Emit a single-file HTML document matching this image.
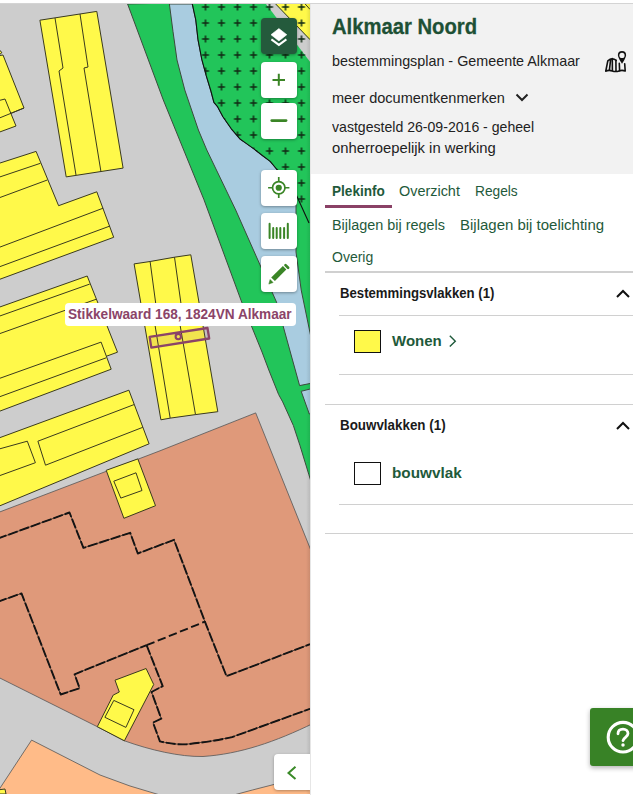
<!DOCTYPE html>
<html><head><meta charset="utf-8">
<style>
html,body{margin:0;padding:0;width:633px;height:795px;overflow:hidden;background:#fff;font-family:"Liberation Sans",sans-serif;}
#topline{position:absolute;left:0;top:3px;width:633px;height:1px;background:#d4d4d4;}
#map{position:absolute;left:0;top:0;width:310px;height:795px;}
.btn{position:absolute;left:261px;width:36px;height:36px;background:#fff;border-radius:4px;box-shadow:0 1px 3px rgba(0,0,0,.35);}
.btn svg{position:absolute;left:0;top:0;}
#panel{position:absolute;left:310px;top:4px;width:323px;height:791px;background:#fff;border-left:1px solid #e6e6e6;box-sizing:border-box;}
#head{position:absolute;left:311px;top:4px;width:322px;height:170px;background:#f2f2f2;}
.t{position:absolute;white-space:nowrap;line-height:1;}
</style></head><body>
<svg id="map" width="310" height="795" viewBox="0 0 310 795">
<defs>
<clipPath id="mc"><rect x="0" y="4" width="310" height="790"/></clipPath>
<pattern id="plus" patternUnits="userSpaceOnUse" x="5.5" y="-1" width="16" height="16">
<path d="M4.5 8H11.5M8 4.5V11.5" stroke="#0f2a14" stroke-width="1.5"/>
</pattern>
<clipPath id="pc"><path d="M192.3,4 L195.8,20 L198,39.6 L201.8,59.3 L206.3,75.9 L210.9,91 L213.9,102.3 L217.7,106.9 L222.9,116.7 L231.3,128.8 L240.3,139.3 L245.1,142.6 L253.9,148.9 L262.7,155.8 L270.2,161.4 L276.5,169 L290,182 L297,196.5 L309,222.9 L310,223 L310,4Z"/></clipPath>
<linearGradient id="shd" x1="0" x2="1" y1="0" y2="0"><stop offset="0" stop-color="#000" stop-opacity="0"/><stop offset="1" stop-color="#000" stop-opacity="0.09"/></linearGradient>
</defs>
<g clip-path="url(#mc)" stroke-linejoin="round">
<rect x="0" y="0" width="310" height="795" fill="#cdcdcd"/>
<!-- plain green -->
<path d="M127.6,4 L163.3,100 L204,199.8 L241.7,302.1 L262,352 L268.8,370 L278.6,394.5 L282.7,401.9 L293.4,425.6 L299.9,445.3 L308.9,474.7 L314,491.4 L314,0Z" fill="#22c55a" stroke="#3c4a3c" stroke-width="1"/>
<!-- water -->
<path d="M169.4,4 L173,31.6 L177,60 L184.8,90 L198.4,130 L206.8,150 L235.7,210 L276.5,302.1 L299.6,385.6 L314,382.7 L314,352 L301.2,290 L296,252 L296,190 L276.5,169 L270.2,161.4 L262.7,155.8 L253.9,148.9 L245.1,142.6 L240.3,139.3 L231.3,128.8 L222.9,116.7 L217.7,106.9 L213.9,102.3 L210.9,91 L206.3,75.9 L201.8,59.3 L198,39.6 L195.8,20 L192.3,4Z" fill="#a9cce0" stroke="#3c4a3c" stroke-width="1"/>
<path d="M301.2,391.3 L314,388 L314,413 L309.3,414Z" fill="#a9cce0" stroke="#3c4a3c" stroke-width="1"/>
<!-- pattern green -->
<path d="M192.3,4 L195.8,20 L198,39.6 L201.8,59.3 L206.3,75.9 L210.9,91 L213.9,102.3 L217.7,106.9 L222.9,116.7 L231.3,128.8 L240.3,139.3 L245.1,142.6 L253.9,148.9 L262.7,155.8 L270.2,161.4 L276.5,169 L290,182 L297,196.5 L309,222.9 L310,223 L310,4Z" fill="#22c55a"/>
<path d="M266,4 L310,61.8 L310,39.6 L275.7,4Z" fill="#cdcdcd"/>
<path d="M275.7,4 L310,39.6 L310,4Z" fill="#fff94a"/>
<path d="M275.7,4 L310,39.6 M305.2,4 L310,9.4" stroke="#3a3a1e" stroke-width="1"/>
<rect x="180" y="0" width="130" height="230" fill="url(#plus)" clip-path="url(#pc)"/>
<path d="M192.3,4 L195.8,20 L198,39.6 L201.8,59.3 L206.3,75.9 L210.9,91 L213.9,102.3 L217.7,106.9 L222.9,116.7 L231.3,128.8 L240.3,139.3 L245.1,142.6 L253.9,148.9 L262.7,155.8 L270.2,161.4 L276.5,169 L290,182 L297,196.5 L309,222.9" fill="none" stroke="#111" stroke-width="1.1"/>
<!-- salmon -->
<path d="M-3,513 L160,450.8 L255.7,412.9 L314,558 L314,723 C275,742 240,754 203,756.5 C180,757 150,750 124.4,740.8 L97.3,726.7 L-3,676.6Z" fill="#df997a" stroke="#555" stroke-width="0.8"/>
<!-- light orange -->
<path d="M-3,792.7 L31.6,740.1 L100,775 Q130,787 160,795 L230,796 Q252,790 275,784.2 L314,776 L314,800 L-3,800Z" fill="#ffbb88" stroke="#555" stroke-width="0.8"/>
<!-- buildings -->
<g fill="#fff94a" stroke="#3a3a1e" stroke-width="1">
<path d="M-3,48.8 L1.8,52.6 L-3,55Z"/>
<path d="M-3,56 L3,55 L24,108 L-3,119Z"/>
<path d="M-3,101 L5,99 L16,126 L-3,133Z"/>
<path d="M24,108 L-3,119" fill="none"/>
<path d="M-3,47 L1.8,52.6 L-3,57Z"/>
<path d="M39.9,20.2 L96.8,11.4 L123.1,168.1 L66.2,176.9Z"/>
<path d="M55,18 L63,68 L59,71 L76,175 M80,14 L88,67 L84,68 L101,172" fill="none"/>
<path d="M-3,164 L36.1,151.4 L58.6,205.7 L96.8,191.8 L113.7,237.3 L-3,280.3Z"/>
<path d="M-3,177.9 L40.4,163.3 M-3,198.6 L47.3,180 M-3,248.2 L103.1,208.2 M-3,267.7 L110,226" fill="none"/>
<path d="M-3,308 L87.2,276 L117.5,352.2 L-3,396Z"/>
<path d="M-3,317 L89.7,284.1 M-3,334.6 L96,299.3" fill="none"/>
<path d="M-3,379.3 L101.1,342.1 L111.2,369.2 L-3,412.2Z"/>
<path d="M-3,397.7 L106.2,357.8" fill="none"/>
<path d="M-3,438.7 L128.9,390.2 L149.1,443.8 L-3,507Z"/>
<path d="M37.9,441.2 L134,404.6 M45.5,465.2 L142.8,427.3 M37.9,441.2 L45.5,465.2" fill="none"/>
<path d="M-3,449.6 L27.3,441.2 L35.4,462.7 L-3,476.6Z"/>
<path d="M106.2,470.3 L137.8,458.9 L155.5,505.7 L123.9,518.3Z"/>
<path d="M113.8,481.2 L136,472.8 L142,490.5 L120.8,498.1Z"/>
<path d="M134.1,263.9 L150.1,261.5 L174.5,257.2 L190.8,254.8 L217.8,411.7 L195.5,414.6 L170.4,418.1 L160.9,419.8Z"/>
<path d="M150.1,261.5 L157,313 L153.5,316 L170.2,418.2 M174.5,257.2 L182.3,313 L178.5,316 L195.5,414.6" fill="none"/>
<path d="M115,680.2 L146.1,668.5 L153.7,684.5 L124.4,740.8 L97.3,726.7 L113.2,695.1 L119.3,692Z"/>
<path d="M113.8,700.4 L134,709.7 L125.9,727.4 L104.9,717.3Z"/>
<path d="M-3,790 L5,789 L6,794 L-3,794Z"/>
</g>
<!-- dashed -->
<g fill="none" stroke="#1a1a1a" stroke-width="0.7">
<path d="M-3,538.9 L69.5,512.5 L83.4,547.9 L130.2,532.8 L137.8,553.5 L174,539.8 L205.2,622.4 L226.5,676.2 L310,644.2"/>
<path d="M-3,602 L21.5,593.4 L60.7,694.5 L79.6,688.2 L74.6,674.3 L146.6,645.2"/>
<path d="M146.6,645.2 L162.7,686.1 L151.5,692 L161.3,718.7 L153,722.6 L159.9,741.3 Q175,745 186.8,744.2 Q210,742 232.1,737.1 L310,708.8"/>
</g>
<g fill="none" stroke="#141414" stroke-width="1.9" stroke-dasharray="10 2">
<path d="M-3,538.9 L69.5,512.5 L83.4,547.9 L130.2,532.8 L137.8,553.5 L174,539.8 L205.2,622.4 L226.5,676.2 L310,644.2"/>
<path d="M-3,602 L21.5,593.4 L60.7,694.5 L79.6,688.2 L74.6,674.3 L146.6,645.2"/>
<path d="M146.6,645.2 L162.7,686.1 L151.5,692 L161.3,718.7 L153,722.6 L159.9,741.3 Q175,745 186.8,744.2 Q210,742 232.1,737.1 L310,708.8"/>
</g>
<path d="M146.6,645.2 L205.2,621.5" fill="none" stroke="#141414" stroke-width="1.9" stroke-dasharray="8.5 3.5"/>
<rect x="306" y="4" width="4" height="790" fill="url(#shd)"/>
<!-- parcel -->
<path d="M149.6,336.8 L207.5,328 L209.2,338.5 L151.3,347.6Z" fill="rgba(140,70,105,0.12)" stroke="#8b4468" stroke-width="2.3"/>
<circle cx="178.3" cy="336.6" r="2.7" fill="none" stroke="#8b4468" stroke-width="2.1"/>
</g>
</svg>
<div style="position:absolute;left:64.5px;top:303px;width:231.5px;height:22.5px;background:#fff;border-radius:4px;"></div>
<div class="t" id="lbl" style="left:67.5px;top:307px;font-size:14px;font-weight:bold;color:#8b4468;transform:scaleX(0.973);transform-origin:0 0;">Stikkelwaard 168, 1824VN Alkmaar</div>

<!-- buttons -->
<div class="btn" style="top:18px;background:#245a3c;">
<svg width="36" height="36"><path d="M17.9 10.6 L25.8 16.7 L17.9 22.9 L10 16.7Z" fill="#fff" stroke="#fff" stroke-width="0.6" stroke-linejoin="round"/><path d="M10.4 21.4 L17.9 26.9 L25.4 21.4" fill="none" stroke="#fff" stroke-width="2"/></svg></div>
<div class="btn" style="top:62px;"><svg width="36" height="36"><path d="M11.5 18H24M17.8 11.7V23.8" stroke="#3a8526" stroke-width="2"/></svg></div>
<div class="btn" style="top:103px;"><svg width="36" height="36"><path d="M10.7 17.6H25.1" stroke="#3a8526" stroke-width="2.6" stroke-linecap="round"/></svg></div>
<div class="btn" style="top:170px;"><svg width="36" height="36"><circle cx="17.75" cy="17.75" r="6.2" fill="none" stroke="#3a8526" stroke-width="1.7"/><circle cx="17.75" cy="17.75" r="3.1" fill="#3a8526"/><path d="M7.1 17.75H11.6M23.9 17.75H28.4M17.75 7.1V11.6M17.75 23.9V27.9" stroke="#3a8526" stroke-width="1.7"/></svg></div>
<div class="btn" style="top:213px;"><svg width="36" height="36"><path d="M8.6 10.7V25M12.2 15V25M15.7 15V25M19.3 15V25M23.1 15V25M26.8 10.7V25" stroke="#3a8526" stroke-width="2" stroke-linecap="round"/></svg></div>
<div class="btn" style="top:256px;"><svg width="36" height="36"><path d="M10.2 21.6 L21.9 10 L25.3 13.4 L13.9 25Z" fill="#3a8526"/><path d="M9.1 23.5 L12.1 26.5 L7.8 28.1Z" fill="#3a8526" stroke="#3a8526" stroke-width="0.5" stroke-linejoin="round"/><path d="M24.5 9.1 L27.1 11.7" stroke="#3a8526" stroke-width="2.7" stroke-linecap="round"/></svg></div>

<!-- collapse -->
<div style="position:absolute;left:274px;top:754px;width:36px;height:36px;background:#fff;border-radius:4px 0 0 4px;box-shadow:0 1px 3px rgba(0,0,0,.3);">
<svg width="36" height="36"><path d="M21.5 12.7 L14.5 19 L21.5 25" fill="none" stroke="#3a8a28" stroke-width="2"/></svg></div>

<!-- panel -->
<div id="panel"></div>
<div id="head"></div>
<!-- panel text -->
<div class="t" id="title" style="left:332px;top:16px;font-size:22px;font-weight:bold;color:#1d5035;-webkit-text-stroke:0.3px #1d5035;transform:scaleX(0.92);transform-origin:0 0;">Alkmaar Noord</div>
<div class="t" id="sub" style="left:332px;top:53px;font-size:15px;color:#222;transform:scaleX(0.956);transform-origin:0 0;">bestemmingsplan - Gemeente Alkmaar</div>
<div class="t" id="meer" style="left:332px;top:90px;font-size:15px;color:#222;transform:scaleX(0.969);transform-origin:0 0;">meer documentkenmerken</div>
<svg style="position:absolute;left:514px;top:92px" width="16" height="12"><path d="M2.5 2.5 L8 8 L13.5 2.5" fill="none" stroke="#222" stroke-width="2"/></svg>
<div class="t" id="vast" style="left:332px;top:119px;font-size:15px;color:#222;transform:scaleX(0.939);transform-origin:0 0;">vastgesteld 26-09-2016 - geheel</div>
<div class="t" id="onh" style="left:332px;top:140px;font-size:15px;color:#222;transform:scaleX(0.987);transform-origin:0 0;">onherroepelijk in werking</div>
<svg style="position:absolute;left:600px;top:46px" width="32" height="30"><g fill="none" stroke="#111" stroke-width="1.6" stroke-linejoin="round" stroke-linecap="round"><path d="M5.8 25 L7.8 14.8 Q12 11.2 16.2 14.4"/><path d="M5.8 25 Q9 23.9 12.3 24.9 Q15.7 26 19 24.9 Q22.2 23.9 25.2 25 L24.7 17.8"/><path d="M10.6 13.6 L9.4 24.2 M12.3 12.5 L12.4 24.5 M15.9 14.2 L16 25.2 M19.3 17.2 L19.6 24.6"/></g><circle cx="22" cy="9.6" r="5.6" fill="#f2f2f2"/><path d="M22 5 A4.1 4.1 0 0 1 26.1 9.1 C26.1 12 22 17.8 22 17.8 C22 17.8 17.9 12 17.9 9.1 A4.1 4.1 0 0 1 22 5Z" fill="#111"/><circle cx="22" cy="9.4" r="2.6" fill="#f2f2f2"/></svg>

<div class="t" id="tab1" style="left:332px;top:184px;font-size:14px;font-weight:bold;color:#1f5a3b;transform:scaleX(0.97);transform-origin:0 0;">Plekinfo</div>
<div class="t" id="tab2" style="left:399px;top:184px;font-size:14px;color:#1f5a3b;transform:scaleX(1.03);transform-origin:0 0;">Overzicht</div>
<div class="t" id="tab3" style="left:475px;top:184px;font-size:14px;color:#1f5a3b;transform:scaleX(0.98);transform-origin:0 0;">Regels</div>
<div style="position:absolute;left:325px;top:205px;width:67px;height:3px;background:#8a4166;"></div>
<div class="t" id="tab4" style="left:332px;top:218px;font-size:14px;color:#1f5a3b;transform:scaleX(1.03);transform-origin:0 0;">Bijlagen bij regels</div>
<div class="t" id="tab5" style="left:460px;top:218px;font-size:14px;color:#1f5a3b;transform:scaleX(1.07);transform-origin:0 0;">Bijlagen bij toelichting</div>
<div class="t" id="tab6" style="left:332px;top:250px;font-size:14px;color:#1f5a3b;">Overig</div>
<div style="position:absolute;left:325px;top:271px;width:308px;height:2px;background:#d0d0d0;"></div>

<div class="t" id="sec1" style="left:340px;top:286px;font-size:14px;font-weight:bold;color:#1a1a1a;transform:scaleX(0.94);transform-origin:0 0;">Bestemmingsvlakken (1)</div>
<svg style="position:absolute;left:614px;top:286px" width="18" height="14"><path d="M3 11 L9 5 L15 11" fill="none" stroke="#111" stroke-width="2"/></svg>
<div style="position:absolute;left:339px;top:315px;width:294px;height:1px;background:#d0d0d0;"></div>
<div style="position:absolute;left:354px;top:330px;width:27px;height:23px;box-sizing:border-box;border:1px solid #111;background:#fff94a;"></div>
<div class="t" id="wonen" style="left:392px;top:332.5px;font-size:15px;font-weight:bold;color:#1f5a3b;transform:scaleX(1.0);transform-origin:0 0;">Wonen</div>
<svg style="position:absolute;left:446px;top:333px" width="14" height="16"><path d="M3.8 2.8 L9.3 8.2 L3.8 13.6" fill="none" stroke="#1f5a3b" stroke-width="1.4"/></svg>
<div style="position:absolute;left:339px;top:374px;width:294px;height:1px;background:#d0d0d0;"></div>
<div style="position:absolute;left:325px;top:404px;width:308px;height:1px;background:#d0d0d0;"></div>

<div class="t" id="sec2" style="left:340px;top:418px;font-size:14px;font-weight:bold;color:#1a1a1a;transform:scaleX(0.956);transform-origin:0 0;">Bouwvlakken (1)</div>
<svg style="position:absolute;left:614px;top:418px" width="18" height="14"><path d="M3 11 L9 5 L15 11" fill="none" stroke="#111" stroke-width="2"/></svg>
<div style="position:absolute;left:354px;top:462px;width:27px;height:23px;box-sizing:border-box;border:1px solid #111;background:#fff;"></div>
<div class="t" id="bouw" style="left:392px;top:464.5px;font-size:15px;font-weight:bold;color:#1f5a3b;transform:scaleX(1.02);transform-origin:0 0;">bouwvlak</div>
<div style="position:absolute;left:339px;top:504px;width:294px;height:1px;background:#d0d0d0;"></div>
<div style="position:absolute;left:325px;top:533px;width:308px;height:1px;background:#d0d0d0;"></div>

<!-- help -->
<div style="position:absolute;left:590px;top:708px;width:50px;height:58px;background:#388226;border-radius:3px;box-shadow:0 2px 5px rgba(0,0,0,.3);">
<svg width="50" height="58"><circle cx="33" cy="29.2" r="14.8" fill="none" stroke="#fff" stroke-width="3.1"/><path d="M28 25.8 C28 22.8 30.2 21.2 33 21.2 C35.8 21.2 38 23 38 25.6 C38 28.8 34 29 33 32.6" fill="none" stroke="#fff" stroke-width="2.8" stroke-linecap="round"/><circle cx="33" cy="36.9" r="1.75" fill="#fff"/></svg></div>
<div id="topline"></div>
</body></html>
